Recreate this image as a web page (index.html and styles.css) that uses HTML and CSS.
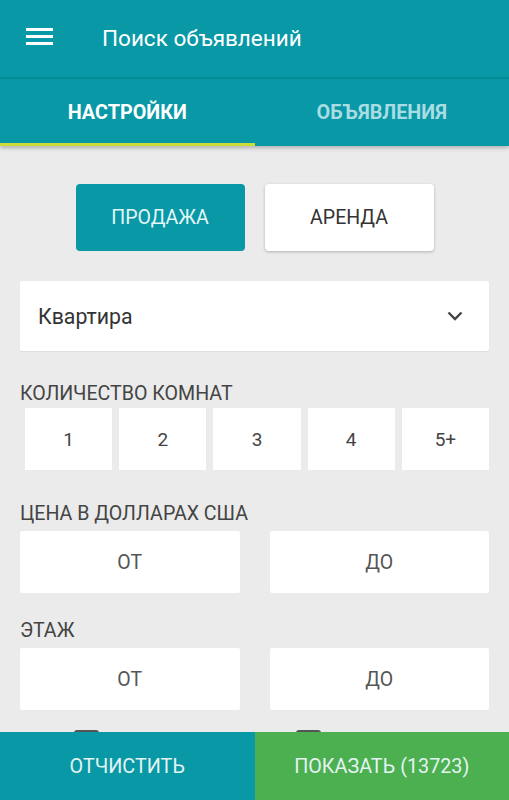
FILE: index.html
```html
<!DOCTYPE html>
<html lang="ru">
<head>
<meta charset="utf-8">
<title>Поиск объявлений</title>
<link rel="stylesheet" href="styles.css">
</head>
<body>
<header class="appbar">
  <svg class="menu-icon" width="27" height="18" viewBox="0 0 27 18">
    <rect x="0" y="0" width="27" height="3" fill="#fff"/>
    <rect x="0" y="7" width="27" height="3" fill="#fff"/>
    <rect x="0" y="14" width="27" height="3" fill="#fff"/>
  </svg>
  <div class="title">Поиск объявлений</div>
</header>
<nav class="tabs">
  <div class="tab active">НАСТРОЙКИ</div>
  <div class="tab">ОБЪЯВЛЕНИЯ</div>
</nav>
<main class="content">
  <div class="toggle">
    <div class="toggle-btn selected">ПРОДАЖА</div>
    <div class="toggle-btn">АРЕНДА</div>
  </div>
  <div class="select">
    <span>Квартира</span>
    <svg class="chevron" width="16" height="10" viewBox="0 0 16 10">
      <path d="M1.5 1.5 L8 8 L14.5 1.5" fill="none" stroke="#444" stroke-width="2.4"/>
    </svg>
  </div>
  <div class="label rooms-label">КОЛИЧЕСТВО КОМНАТ</div>
  <div class="rooms">
    <div class="room">1</div>
    <div class="room">2</div>
    <div class="room">3</div>
    <div class="room">4</div>
    <div class="room">5+</div>
  </div>
  <div class="label price-label">ЦЕНА В ДОЛЛАРАХ США</div>
  <div class="range">
    <div class="field">ОТ</div>
    <div class="field">ДО</div>
  </div>
  <div class="label floor-label">ЭТАЖ</div>
  <div class="range">
    <div class="field">ОТ</div>
    <div class="field">ДО</div>
  </div>
  <div class="checks">
    <div class="check"><span class="box"></span>Не первый</div>
    <div class="check"><span class="box"></span>Не последний</div>
  </div>
</main>
<footer class="bottombar">
  <div class="action clear">ОТЧИСТИТЬ</div>
  <div class="action show">ПОКАЗАТЬ (13723)</div>
</footer>
</body>
</html>
```
FILE: styles.css
```css
* { box-sizing: border-box; }
html, body {
  margin: 0;
  padding: 0;
  height: 800px;
  overflow: hidden;
}
body {
  background: #ebebeb;
  font-family: Roboto, "Noto Sans", sans-serif;
  color: #333;
}
.appbar {
  height: 79px;
  background: #0898a6;
  display: flex;
  align-items: center;
  padding-left: 26px;
  border-bottom: 2px solid #078d9a;
}
.menu-icon { display: block; margin-top: -3px; }
.title {
  color: #fff;
  font-size: 22.5px;
  margin-left: 49px;
  margin-top: -1px;
}
.tabs {
  height: 67px;
  background: #0898a6;
  display: flex;
  box-shadow: 0 2px 4px rgba(0,0,0,0.25);
  position: relative;
}
.tab {
  flex: 1;
  display: flex;
  align-items: center;
  justify-content: center;
  font-size: 19.8px;
  font-weight: 700;
  color: #a9dde3;
  border-bottom: 3px solid transparent;
  padding-top: 2px;
}
.tab.active {
  color: #fff;
  border-bottom-color: #cddc39;
}
.content {
  padding: 38px 20px 0;
  display: flex;
  flex-direction: column;
}
.toggle {
  display: flex;
  justify-content: center;
  gap: 20px;
}
.toggle-btn {
  width: 169px;
  height: 67px;
  border-radius: 4px;
  background: #fff;
  display: flex;
  align-items: center;
  justify-content: center;
  font-size: 19.5px;
  color: #333;
  box-shadow: 0 1px 3px rgba(0,0,0,0.25);
}
.toggle-btn.selected {
  background: #0898a6;
  color: #e3f6f8;
  box-shadow: none;
}
.select {
  margin-top: 30px;
  height: 70px;
  background: #fff;
  border-radius: 2px;
  display: flex;
  align-items: center;
  justify-content: space-between;
  padding: 0 26px 0 18px;
  font-size: 21.3px;
  color: #333;
  box-shadow: 0 1px 1px rgba(0,0,0,0.06);
}
.label {
  font-size: 19.6px;
  color: #444;
  line-height: 20px;
  height: 24px;
}
.rooms-label { margin-top: 33px; }
.price-label { margin-top: 34px; }
.floor-label { margin-top: 28px; }
.rooms {
  display: grid;
  grid-template-columns: repeat(5, 1fr);
  gap: 7px;
  padding-left: 5px;
}
.room {
  height: 62px;
  background: #fff;
  display: flex;
  align-items: center;
  justify-content: center;
  font-size: 19px;
  color: #444;
}
.range {
  display: grid;
  grid-template-columns: 1fr 1fr;
  gap: 30px;
  margin-top: 3px;
}
.field {
  height: 62px;
  background: #fff;
  border-radius: 2px;
  display: flex;
  align-items: center;
  justify-content: center;
  font-size: 19.5px;
  color: #555;
}
.checks {
  display: grid;
  grid-template-columns: 1fr 1fr;
  gap: 30px;
  margin-top: 20px;
}
.check {
  display: flex;
  align-items: center;
  gap: 12px;
  padding-left: 54px;
  font-size: 17px;
  color: #444;
}
.check + .check { padding-left: 26px; }
.box {
  width: 25px;
  height: 25px;
  border: 2.5px solid #555;
  border-radius: 3px;
}
.bottombar {
  position: fixed;
  left: 0;
  right: 0;
  bottom: 0;
  height: 68px;
  display: flex;
}
.action {
  flex: 1;
  display: flex;
  align-items: center;
  justify-content: center;
  font-size: 19.8px;
  color: #e3f4f2;
}
.action.clear { background: #0898a6; }
.action.show { background: #4caf50; }
```
